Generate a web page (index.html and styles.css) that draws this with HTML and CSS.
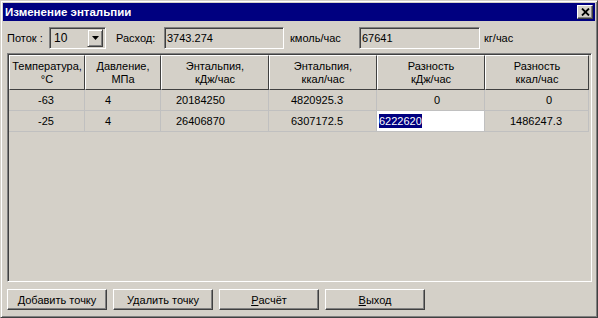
FILE: index.html
```html
<!DOCTYPE html>
<html lang="ru">

<head>
    <meta charset="UTF-8">
    <title>Изменение энтальпии</title>
    <link rel="stylesheet" href="styles.css">
</head>

<body>
    <div class="window">
        <div class="titlebar">
            <span class="title">Изменение энтальпии</span>
            <div class="close">
                <svg width="9" height="8" viewBox="0 0 9 8">
                    <path d="M1 0.5 L8 7.5 M8 0.5 L1 7.5" stroke="#000" stroke-width="1.8" fill="none" />
                </svg>
            </div>
        </div>

        <div class="client">
            <!-- верхняя панель -->
            <div class="toolbar">
                <span class="lbl lbl-potok">Поток :</span>
                <div class="combo">
                    <span class="combo-text">10</span>
                    <div class="combo-btn">
                        <svg width="7" height="4" viewBox="0 0 7 4">
                            <path d="M0 0 H7 L3.5 4 Z" fill="#000" />
                        </svg>
                    </div>
                </div>
                <span class="lbl lbl-rashod">Расход:</span>
                <div class="field field-1">3743.274</div>
                <span class="lbl lbl-kmol">кмоль/час</span>
                <div class="field field-2">67641</div>
                <span class="lbl lbl-kg">кг/час</span>
            </div>

            <!-- таблица точек -->
            <div class="grid">
                <table>
                    <thead>
                        <tr>
                            <th class="w1">Температура,<br>°С</th>
                            <th class="w1">Давление,<br>МПа</th>
                            <th class="w2">Энтальпия,<br>кДж/час</th>
                            <th class="w2">Энтальпия,<br>ккал/час</th>
                            <th class="w2">Разность<br>кДж/час</th>
                            <th class="w3">Разность<br>ккал/час</th>
                        </tr>
                    </thead>
                    <tbody>
                        <tr>
                            <td class="c-temp">-63</td>
                            <td class="c-pres">4</td>
                            <td class="c-kj">20184250</td>
                            <td class="c-kcal">4820925.3</td>
                            <td class="c-d1 zero">0</td>
                            <td class="c-d2 zero">0</td>
                        </tr>
                        <tr>
                            <td class="c-temp">-25</td>
                            <td class="c-pres">4</td>
                            <td class="c-kj">26406870</td>
                            <td class="c-kcal">6307172.5</td>
                            <td class="c-d1 editing"><span class="sel">6222620</span></td>
                            <td class="c-d2">1486247.3</td>
                        </tr>
                    </tbody>
                </table>
            </div>

            <!-- кнопки -->
            <div class="buttons">
                <div class="btn">Добавить точку</div>
                <div class="btn">Удалить точку</div>
                <div class="btn"><u>Р</u>асчёт</div>
                <div class="btn"><u>В</u>ыход</div>
            </div>
        </div>
    </div>
</body>

</html>
```

FILE: styles.css
```css
body {
    margin: 0;
    font-family: "Liberation Sans", Arial, sans-serif;
    font-size: 11px;
    color: #000;
    background: #d4d0c8;
}

.window {
    width: 598px;
    height: 318px;
    box-sizing: border-box;
    background: #d4d0c8;
    border: 1px solid;
    border-color: #d4d0c8 #404040 #404040 #d4d0c8;
    box-shadow: inset 1px 1px #fff, inset -1px -1px #808080;
    padding: 2px;
    display: flex;
    flex-direction: column;
}

.titlebar {
    height: 18px;
    background: #000080;
    display: flex;
    align-items: center;
    padding: 0 2px 0 2px;
}

.title {
    flex: 1;
    color: #fff;
    font-weight: bold;
    font-size: 11.5px;
}

.close {
    width: 16px;
    height: 14px;
    box-sizing: border-box;
    background: #d4d0c8;
    border: 1px solid;
    border-color: #fff #404040 #404040 #fff;
    box-shadow: inset -1px -1px #808080;
    display: flex;
    align-items: center;
    justify-content: center;
}

.client {
    flex: 1;
    padding: 6px 0 0 4px;
    display: flex;
    flex-direction: column;
}

/* верхняя панель */
.toolbar {
    display: flex;
    align-items: center;
    height: 22px;
}

.lbl-potok {
    width: 42px;
}

.lbl-rashod {
    margin-left: 10px;
    width: 48px;
}

.lbl-kmol {
    margin-left: 6px;
    width: 69px;
}

.lbl-kg {
    margin-left: 4px;
}

.combo,
.field {
    height: 22px;
    box-sizing: border-box;
    border: 1px solid;
    border-color: #808080 #fff #fff #808080;
    box-shadow: inset 1px 1px #404040, inset -1px -1px #d4d0c8;
    display: flex;
    align-items: center;
}

.combo {
    width: 57px;
    padding: 0 2px 0 4px;
}

.combo-text {
    flex: 1;
    font-size: 12px;
}

.combo-btn {
    width: 16px;
    height: 18px;
    box-sizing: border-box;
    border: 1px solid;
    border-color: #d4d0c8 #404040 #404040 #d4d0c8;
    box-shadow: inset 1px 1px #fff, inset -1px -1px #808080;
    display: flex;
    align-items: center;
    justify-content: center;
}

.field {
    padding-left: 2px;
}

.field-1 {
    width: 120px;
}

.field-2 {
    width: 121px;
}

/* таблица */
.grid {
    margin: 4px 0 0 0;
    width: 585px;
    height: 229px;
    box-sizing: border-box;
    border: 1px solid;
    border-color: #808080 #fff #fff #808080;
    box-shadow: inset 1px 1px #404040, inset -1px -1px #d4d0c8;
    padding: 1px;
}

table {
    border-collapse: separate;
    border-spacing: 0;
    table-layout: fixed;
    width: 580px;
}

th,
td {
    box-sizing: border-box;
    padding: 0;
    font-weight: normal;
}

th {
    height: 35px;
    line-height: 13px;
    text-align: center;
    border-top: 1px solid #fff;
    border-left: 1px solid #fff;
    border-right: 1px solid #404040;
    border-bottom: 1px solid #404040;
}

.w1 {
    width: 76px;
}

.w2 {
    width: 108px;
}

.w3 {
    width: 104px;
}

td {
    height: 21px;
    border-right: 1px solid #c0c0c0;
    border-bottom: 1px solid #c0c0c0;
    white-space: nowrap;
}

.c-temp {
    padding-left: 29px;
}

.c-pres {
    padding-left: 20px;
}

.c-kj {
    padding-left: 15px;
}

.c-kcal {
    padding-left: 22px;
}

.c-d1.zero {
    padding-left: 57px;
}

.c-d2 {
    padding-left: 25px;
}

.c-d2.zero {
    padding-left: 61px;
}

.editing {
    background: #fff;
    padding-left: 2px;
}

.sel {
    background: #000080;
    color: #fff;
    padding: 1px 0;
}

/* кнопки */
.buttons {
    display: flex;
    gap: 6px;
    margin-top: 7px;
}

.btn {
    width: 100px;
    height: 21px;
    box-sizing: border-box;
    border: 1px solid;
    border-color: #fff #404040 #404040 #fff;
    box-shadow: inset -1px -1px #808080;
    display: flex;
    align-items: center;
    justify-content: center;
}
```
